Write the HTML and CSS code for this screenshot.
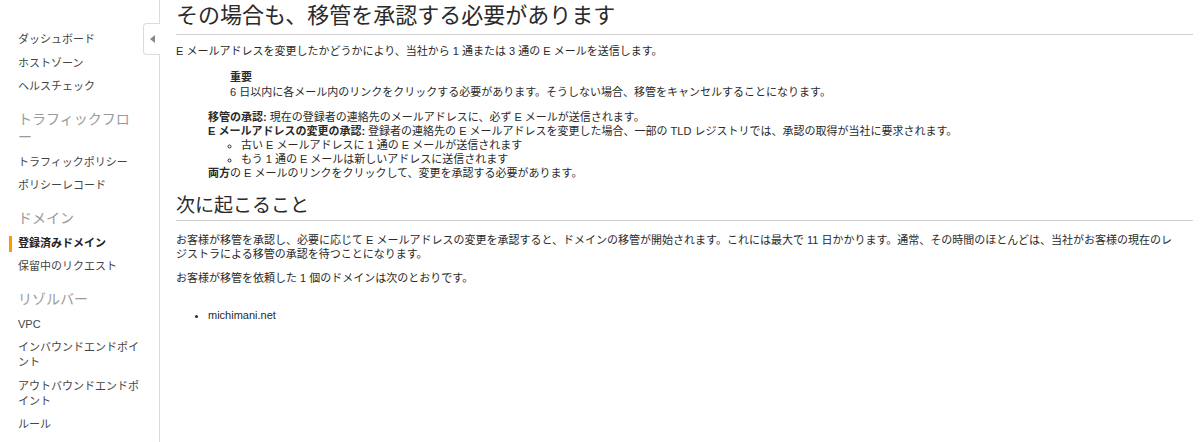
FILE: index.html
```html
<!doctype html>
<html lang="ja">
  <head>
    <meta charset="UTF-8" />
    <meta name="viewport" content="width=device-width, initial-scale=1.0" />
    <title>登録済みドメイン</title>
    <link rel="stylesheet" href="styles.css">
  </head>
  <body>
    <div class="layout">
      <nav class="sidebar">
        <ul class="nav-list">
          <li class="nav-item">ダッシュボード</li>
          <li class="nav-item">ホストゾーン</li>
          <li class="nav-item">ヘルスチェック</li>
        </ul>
        <h3 class="nav-heading">トラフィックフロー</h3>
        <ul class="nav-list">
          <li class="nav-item">トラフィックポリシー</li>
          <li class="nav-item">ポリシーレコード</li>
        </ul>
        <h3 class="nav-heading">ドメイン</h3>
        <ul class="nav-list">
          <li class="nav-item active">登録済みドメイン</li>
          <li class="nav-item">保留中のリクエスト</li>
        </ul>
        <h3 class="nav-heading">リゾルバー</h3>
        <ul class="nav-list">
          <li class="nav-item">VPC</li>
          <li class="nav-item">インバウンドエンドポイント</li>
          <li class="nav-item">アウトバウンドエンドポイント</li>
          <li class="nav-item">ルール</li>
        </ul>
      </nav>

      <!-- sidebar collapse toggle -->
      <div class="collapse-tab">
        <svg width="5" height="8" viewBox="0 0 5 8"><path d="M5 0 L0 4 L5 8 Z" fill="#888"/></svg>
      </div>

      <main class="content">
        <h1 class="page-title">その場合も、移管を承認する必要があります</h1>
        <p class="intro">E メールアドレスを変更したかどうかにより、当社から 1 通または 3 通の E メールを送信します。</p>

        <div class="notice">
          <p class="notice-title">重要</p>
          <p>6 日以内に各メール内のリンクをクリックする必要があります。そうしない場合、移管をキャンセルすることになります。</p>
        </div>

        <div class="steps">
          <p><strong>移管の承認:</strong> 現在の登録者の連絡先のメールアドレスに、必ず E メールが送信されます。</p>
          <p><strong>E メールアドレスの変更の承認:</strong> 登録者の連絡先の E メールアドレスを変更した場合、一部の TLD レジストリでは、承認の取得が当社に要求されます。</p>
          <ul class="sub-list">
            <li>古い E メールアドレスに 1 通の E メールが送信されます</li>
            <li>もう 1 通の E メールは新しいアドレスに送信されます</li>
          </ul>
          <p><strong>両方</strong>の E メールのリンクをクリックして、変更を承認する必要があります。</p>
        </div>

        <h2 class="section-title">次に起こること</h2>
        <p class="text">お客様が移管を承認し、必要に応じて E メールアドレスの変更を承認すると、ドメインの移管が開始されます。これには最大で 11 日かかります。通常、その時間のほとんどは、当社がお客様の現在のレジストラによる移管の承認を待つことになります。</p>
        <p class="text gap">お客様が移管を依頼した 1 個のドメインは次のとおりです。</p>
        <ul class="domain-list">
          <li>michimani.net</li>
        </ul>
      </main>
    </div>
  </body>
</html>
```

FILE: styles.css
```css
:root {
  --text-color: #2a2a2a;
  --nav-text: #444;
  --nav-heading: #9a9a9a;
  --border-color: #dcdcdc;
  --rule-color: #cfcfcf;
  --accent-color: #f90;
}

* {
  margin: 0;
  padding: 0;
  box-sizing: border-box;
}

html,
body {
  height: 100%;
}

body {
  font-family: 'Liberation Sans', 'Noto Sans CJK JP', sans-serif;
  font-size: 11px;
  color: var(--text-color);
  background-color: white;
  overflow: hidden;
}

.layout {
  display: flex;
  height: 100%;
  position: relative;
}

/* sidebar */
.sidebar {
  width: 160px;
  flex-shrink: 0;
  border-right: 1px solid var(--border-color);
  padding: 28px 17px 0 18px;
}

.nav-list {
  list-style: none;
}

.nav-item {
  position: relative;
  font-size: 11px;
  line-height: 15px;
  padding: 4.25px 0;
  color: var(--nav-text);
}

.nav-item.active {
  font-weight: bold;
  color: #222;
}

.nav-item.active::before {
  content: '';
  position: absolute;
  left: -9px;
  top: 4px;
  width: 3px;
  height: 16px;
  background-color: var(--accent-color);
}

.nav-heading {
  font-size: 14px;
  font-weight: normal;
  line-height: 18px;
  color: var(--nav-heading);
  margin: 11.5px 0 4.5px;
}

.collapse-tab {
  position: absolute;
  left: 143px;
  top: 23px;
  width: 17px;
  height: 32px;
  background-color: white;
  border: 1px solid var(--border-color);
  border-right: none;
  border-radius: 4px 0 0 4px;
  display: flex;
  align-items: center;
  justify-content: center;
}

/* main content */
.content {
  flex: 1;
  padding: 2px 7px 0 16px;
  line-height: 14px;
}

.page-title {
  font-size: 22px;
  font-weight: normal;
  line-height: 28px;
  padding-bottom: 4px;
  border-bottom: 1px solid var(--rule-color);
}

.intro {
  margin-top: 9px;
}

.notice {
  margin: 12px 0 0 54px;
  line-height: 15px;
}

.notice-title {
  font-weight: bold;
}

.steps {
  margin: 10px 0 0 32px;
}

.sub-list {
  list-style: circle;
  padding-left: 33px;
}

.section-title {
  font-size: 19px;
  font-weight: normal;
  line-height: 24px;
  margin-top: 14px;
  padding-bottom: 2px;
  border-bottom: 1px solid var(--rule-color);
}

.text {
  margin-top: 12px;
  padding-right: 14px;
}

.text.gap {
  margin-top: 10px;
}

.domain-list {
  margin-top: 23px;
  padding-left: 32px;
}
```
